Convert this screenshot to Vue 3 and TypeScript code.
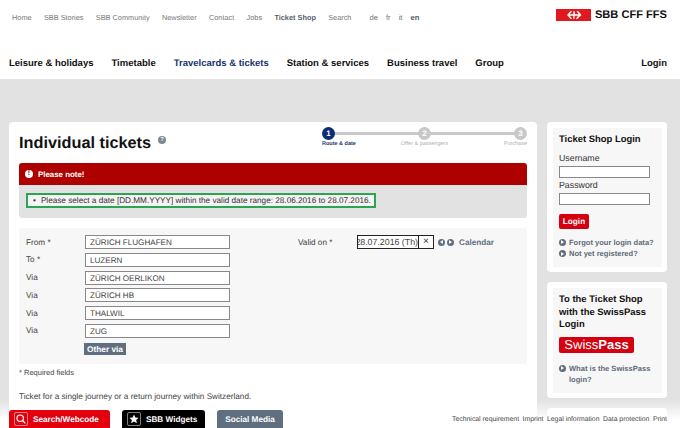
<template>
  <div class="page">
    <header class="header">
      <div class="meta">
        <nav class="meta-nav">
          <a v-for="item in metaLinks" :key="item" :class="{ active: item === 'Ticket Shop' }">{{ item }}</a>
        </nav>
        <nav class="langs">
          <a v-for="lang in langs" :key="lang" :class="{ active: lang === 'en' }">{{ lang }}</a>
        </nav>
        <div class="logo">
          <svg class="logo-flag" viewBox="0 0 35 12" width="35" height="12">
            <rect width="35" height="12" fill="#e2181f" />
            <path d="M18.6 2.2h-1.3v3.1h-3.5l2.4-3.1h-1.9l-3.2 3.8 3.2 3.8h1.9l-2.4-3.1h3.5v3.1h1.3V6.7h3.5l-2.4 3.1h1.9L25.5 6l-3.2-3.8h-1.9l2.4 3.1h-3.7z" fill="#fff" />
          </svg>
          <span class="logo-text">SBB CFF FFS</span>
        </div>
      </div>
      <nav class="main-nav">
        <a v-for="item in mainLinks" :key="item" :class="{ active: item === 'Travelcards & tickets' }">{{ item }}</a>
        <a class="login-link">Login</a>
      </nav>
    </header>

    <main class="content">
      <section class="card main-card">
        <div class="title-row">
          <h1>Individual tickets</h1>
          <span class="help">?</span>
          <ol class="steps">
            <li v-for="(step, i) in steps" :key="step" :class="{ current: i === 0 }">
              <span class="step-dot">{{ i + 1 }}</span>
              <span class="step-label">{{ step }}</span>
            </li>
          </ol>
        </div>

        <div class="notice">
          <div class="notice-head"><span class="notice-icon">!</span>Please note!</div>
          <div class="notice-body">
            <div class="notice-msg">
              <span class="bullet">•</span>Please select a date [DD.MM.YYYY] within the valid date range: 28.06.2016 to 28.07.2016.
            </div>
          </div>
        </div>

        <form class="route" @submit.prevent>
          <div class="route-left">
            <div v-for="row in stops" :key="row.label + row.value" class="field-row">
              <label>{{ row.label }}</label>
              <div class="text-box">{{ row.value }}</div>
            </div>
            <div class="field-row">
              <label></label>
              <button class="other-via" type="button">Other via</button>
            </div>
          </div>
          <div class="route-right">
            <label>Valid on *</label>
            <div class="date-box">
              <span class="date-text"><span class="date-inner">28.07.2016 (Th)</span></span>
              <span class="date-clear">×</span>
            </div>
            <span class="round-btn"><i class="tri left"></i></span>
            <span class="round-btn"><i class="tri right"></i></span>
            <a class="calendar">Calendar</a>
          </div>
        </form>

        <p class="required">* Required fields</p>
        <p class="desc">Ticket for a single journey or a return journey within Switzerland.</p>
      </section>

      <aside class="side">
        <section class="card side-card">
          <div class="side-inner login-inner">
            <h2>Ticket Shop Login</h2>
            <label>Username</label>
            <div class="side-input"></div>
            <label>Password</label>
            <div class="side-input"></div>
            <button class="login-btn" type="button">Login</button>
            <a class="side-link"><span class="arrow-dot"><i></i></span>Forgot your login data?</a>
            <a class="side-link"><span class="arrow-dot"><i></i></span>Not yet registered?</a>
          </div>
        </section>
        <section class="card side-card">
          <div class="side-inner pass-inner">
            <h2>To the Ticket Shop with the SwissPass Login</h2>
            <div class="swisspass">Swiss<b>Pass</b></div>
            <a class="side-link wrap"><span class="arrow-dot"><i></i></span><span>What is the SwissPass login?</span></a>
          </div>
        </section>
        <section class="card side-card stub"></section>
      </aside>
    </main>

    <footer class="footer">
      <div class="tabs">
        <a class="tab red">
          <span class="tab-icon">
            <svg viewBox="0 0 12 12" width="10" height="10" fill="none" stroke="#fff" stroke-width="1.4">
              <circle cx="5" cy="5" r="3.8" />
              <path d="M7.8 7.8 11.2 11.2" />
            </svg>
          </span>
          Search/Webcode
        </a>
        <a class="tab black">
          <span class="tab-icon">
            <svg viewBox="0 0 12 12" width="10" height="10"><path d="M6 .6l1.6 3.6 3.9.4-2.9 2.6.8 3.9L6 9.1l-3.4 2 .8-3.9L.5 4.6l3.9-.4z" fill="#fff" /></svg>
          </span>
          SBB Widgets
        </a>
        <a class="tab grey">Social Media</a>
      </div>
      <nav class="foot-links">
        <a v-for="item in footLinks" :key="item">{{ item }}</a>
      </nav>
    </footer>
  </div>
</template>

<script setup lang="ts">
interface Stop {
  label: string;
  value: string;
}

const metaLinks: string[] = ["Home", "SBB Stories", "SBB Community", "Newsletter", "Contact", "Jobs", "Ticket Shop", "Search"];
const langs: string[] = ["de", "fr", "it", "en"];
const mainLinks: string[] = ["Leisure & holidays", "Timetable", "Travelcards & tickets", "Station & services", "Business travel", "Group"];
const steps: string[] = ["Route & date", "Offer & passengers", "Purchase"];
const stops: Stop[] = [
  { label: "From *", value: "ZÜRICH FLUGHAFEN" },
  { label: "To *", value: "LUZERN" },
  { label: "Via", value: "ZÜRICH OERLIKON" },
  { label: "Via", value: "ZÜRICH HB" },
  { label: "Via", value: "THALWIL" },
  { label: "Via", value: "ZUG" },
];
const footLinks: string[] = ["Technical requirement", "Imprint", "Legal information", "Data protection", "Print"];
</script>

<style>
html,
body {
  margin: 0;
  overflow: hidden;
}
</style>

<style scoped>
.page {
  position: relative;
  width: 680px;
  height: 428px;
  overflow: hidden;
  background: #e2e2e2;
  font-family: "Liberation Sans", Arial, sans-serif;
  color: #333;
  text-rendering: geometricPrecision;
}

.header {
  height: 79px;
  background: #fff;
  display: flex;
  flex-direction: column;
}

.meta {
  display: flex;
  align-items: flex-start;
  height: 46px;
  padding: 0 13px 0 12px;
}

.meta-nav {
  display: flex;
  gap: 12.3px;
  padding-top: 12px;
  font-size: 7.35px;
  line-height: 11px;
  color: #777;
}

.meta-nav .active {
  font-weight: bold;
  color: #56606b;
}

.langs {
  display: flex;
  gap: 8px;
  margin-left: 18px;
  padding-top: 12px;
  font-size: 7.65px;
  line-height: 11px;
  color: #777;
}

.langs .active {
  font-weight: bold;
  color: #56606b;
}

.logo {
  margin-left: auto;
  display: flex;
  align-items: center;
  gap: 4px;
  padding-top: 9px;
}

.logo-flag {
  display: block;
}

.logo-text {
  font-size: 11.1px;
  line-height: 12px;
  font-weight: bold;
  color: #111;
}

.main-nav {
  display: flex;
  gap: 18px;
  padding: 11px 13px 0 9px;
  font-size: 9.5px;
  line-height: 14px;
  font-weight: bold;
  color: #111;
}

.main-nav .active {
  color: #18366f;
}

.login-link {
  margin-left: auto;
}

.content {
  display: flex;
  align-items: flex-start;
  gap: 10px;
  padding: 43px 13px 0 9px;
}

.card {
  background: #fff;
  border-radius: 4px;
}

.main-card {
  width: 528px;
  flex: none;
  padding: 0 10px;
  box-sizing: border-box;
  height: 330px;
}

.title-row {
  display: flex;
  align-items: flex-start;
  height: 41px;
}

h1 {
  margin: 10px 0 0;
  font-size: 16.3px;
  line-height: 22px;
  font-weight: bold;
  color: #111;
}

.help {
  width: 8px;
  height: 8px;
  margin: 14px 0 0 7px;
  border-radius: 50%;
  background: #7b8794;
  color: #fff;
  font-size: 6px;
  line-height: 8px;
  text-align: center;
  font-weight: bold;
}

.steps {
  position: relative;
  display: flex;
  justify-content: space-between;
  list-style: none;
  margin: 5px 0 0 auto;
  padding: 0;
  width: 205px;
  box-sizing: border-box;
}

.steps::before {
  content: "";
  position: absolute;
  left: 8px;
  right: 8px;
  top: 5px;
  height: 3px;
  background: #c8c8c8;
}

.steps li {
  position: relative;
  display: flex;
  flex-direction: column;
  align-items: center;
  font-size: 5.5px;
  color: #b0b0b0;
}

.steps li:first-child {
  align-items: flex-start;
  width: 34px;
}

.steps li:last-child {
  align-items: flex-end;
  width: 34px;
}

.step-dot {
  width: 13px;
  height: 13px;
  border-radius: 50%;
  background: #c8c8c8;
  color: #fff;
  font-size: 8px;
  line-height: 13px;
  font-weight: bold;
  text-align: center;
}

.steps .current .step-dot {
  background: #0b2c77;
}

.step-label {
  margin-top: 1px;
  line-height: 7px;
}

.steps .current .step-label {
  color: #18366f;
  font-weight: bold;
}

.notice {
  border-radius: 3px;
  overflow: hidden;
}

.notice-head {
  display: flex;
  align-items: center;
  height: 22px;
  padding-left: 6px;
  background: #af0000;
  color: #fff;
  font-size: 7.9px;
  font-weight: bold;
}

.notice-icon {
  width: 8px;
  height: 8px;
  margin-right: 5px;
  border-radius: 50%;
  background: #fff;
  color: #af0000;
  font-size: 7px;
  line-height: 8px;
  text-align: center;
}

.notice-body {
  display: flex;
  background: #e2e2e2;
  padding: 8px 7px 10px;
}

.notice-msg {
  border: 2px solid #2ca453;
  background: #f4f4f4;
  padding: 0 3px 0 5px;
  font-size: 8.2px;
  line-height: 11px;
  color: #333;
}

.bullet {
  margin-right: 5px;
}

.route {
  display: flex;
  margin-top: 10px;
  padding: 7px 0 0 7px;
  height: 136px;
  box-sizing: border-box;
  background: #f7f7f7;
  border-radius: 3px;
  font-size: 8.2px;
  color: #444;
}

.route-left {
  width: 272px;
  flex: none;
}

.field-row {
  display: flex;
  align-items: center;
  height: 14px;
  margin-bottom: 3.8px;
}

.field-row label {
  width: 59px;
  flex: none;
}

.text-box {
  width: 145px;
  height: 14px;
  box-sizing: border-box;
  border: 1px solid #888;
  background: #fff;
  padding-left: 4px;
  font-size: 8.1px;
  line-height: 13px;
  color: #444;
}

.other-via {
  border: 0;
  padding: 0 3px;
  height: 12px;
  margin: 1px 0 0 -1px;
  background: #5f6f80;
  color: #fff;
  font: bold 8.3px/12px "Liberation Sans", Arial, sans-serif;
  text-rendering: geometricPrecision;
}

.route-right {
  display: flex;
  align-items: center;
  height: 14px;
}

.route-right label {
  width: 59px;
  flex: none;
}

.date-box {
  display: flex;
  width: 77px;
  height: 14px;
  box-sizing: border-box;
  border: 1px solid #222;
  background: #fff;
  margin-right: 4px;
}

.date-text {
  width: 60px;
  overflow: hidden;
  border-right: 1px solid #222;
  line-height: 12px;
  font-size: 8.8px;
  direction: rtl;
  white-space: nowrap;
  text-align: left;
}

.date-inner {
  unicode-bidi: plaintext;
}

.date-clear {
  flex: 1;
  text-align: center;
  font-size: 10px;
  line-height: 11px;
  color: #333;
}

.round-btn {
  display: flex;
  align-items: center;
  justify-content: center;
  width: 7px;
  height: 7px;
  margin-right: 2px;
  border-radius: 50%;
  background: #5f6f80;
}

.tri {
  width: 0;
  height: 0;
  border-top: 2px solid transparent;
  border-bottom: 2px solid transparent;
}

.tri.left {
  border-right: 3px solid #fff;
}

.tri.right {
  border-left: 3px solid #fff;
}

.calendar {
  margin-left: 3px;
  font-weight: bold;
  font-size: 8.2px;
  color: #5f6f80;
}

.required {
  margin: 3px 0 0;
  font-size: 7.5px;
  line-height: 11px;
  color: #444;
}

.desc {
  margin: 13px 0 0;
  font-size: 8.2px;
  line-height: 12px;
  color: #444;
}

.side {
  width: 120px;
  flex: none;
  display: flex;
  flex-direction: column;
  gap: 10px;
}

.side-card {
  padding: 6px 5px 5px 6px;
}

.side-inner {
  background: #f7f7f7;
  padding: 6px 6px 0;
  display: flex;
  flex-direction: column;
  align-items: flex-start;
  box-sizing: border-box;
}

.login-inner {
  height: 139px;
}

.pass-inner {
  height: 105px;
}

.stub {
  height: 40px;
  padding: 0;
}

h2 {
  margin: 0;
  font-size: 9.45px;
  line-height: 12.5px;
  font-weight: bold;
  color: #111;
}

.login-inner label {
  font-size: 8.8px;
  line-height: 11px;
  color: #333;
}

.login-inner h2 {
  margin-bottom: 6px;
}

.side-input {
  width: 91px;
  height: 12px;
  box-sizing: border-box;
  border: 1px solid #888;
  background: #fff;
  margin: 2px 0;
}

.login-btn {
  margin: 7px 0 8px;
  width: 30px;
  height: 15px;
  border: 0;
  border-radius: 2px;
  padding: 0;
  background: #d4000f;
  color: #fff;
  font: bold 8.2px/15px "Liberation Sans", Arial, sans-serif;
  text-rendering: geometricPrecision;
}

.side-link {
  display: flex;
  align-items: flex-start;
  font-size: 7.55px;
  line-height: 11.5px;
  font-weight: bold;
  color: #5f6a78;
  white-space: nowrap;
}

.side-link.wrap {
  white-space: normal;
}

.arrow-dot {
  flex: none;
  display: flex;
  align-items: center;
  justify-content: center;
  width: 7px;
  height: 7px;
  margin: 2px 3px 0 0;
  border-radius: 50%;
  background: #5f6f80;
}

.arrow-dot i {
  width: 0;
  height: 0;
  border-top: 2px solid transparent;
  border-bottom: 2px solid transparent;
  border-left: 3px solid #fff;
}

.pass-inner h2 {
  margin-bottom: 5px;
}

.swisspass {
  width: 75px;
  height: 16px;
  border-radius: 2px;
  background: #d4000f;
  color: #fff;
  font-size: 13px;
  line-height: 16px;
  text-align: center;
  font-weight: normal;
  margin-bottom: 10px;
}

.footer {
  position: absolute;
  left: 0;
  right: 0;
  bottom: 0;
  height: 28px;
  display: flex;
  align-items: flex-end;
  padding: 0 13px 0 9px;
  background: linear-gradient(to bottom, rgba(255, 255, 255, 0), #fff 70%);
  box-sizing: border-box;
}

.tabs {
  display: flex;
  gap: 12px;
}

.tab {
  display: flex;
  align-items: center;
  height: 18px;
  border-radius: 3px 3px 0 0;
  color: #fff;
  font-size: 8.2px;
  font-weight: bold;
}

.tab.red {
  width: 101px;
  padding-left: 5px;
  background: #e2000f;
  box-sizing: border-box;
}

.tab.black {
  width: 83px;
  padding-left: 5px;
  background: #000;
  box-sizing: border-box;
}

.tab.grey {
  width: 66px;
  justify-content: center;
  background: #5f6f80;
}

.tab-icon {
  display: flex;
  align-items: center;
  justify-content: center;
  width: 14px;
  height: 14px;
  margin-right: 5px;
  border: 1px solid rgba(255, 255, 255, 0.5);
  border-radius: 2px;
  box-sizing: border-box;
}

.foot-links {
  margin-left: auto;
  display: flex;
  gap: 3.5px;
  height: 12px;
  font-size: 6.85px;
  color: #444;
}
</style>
